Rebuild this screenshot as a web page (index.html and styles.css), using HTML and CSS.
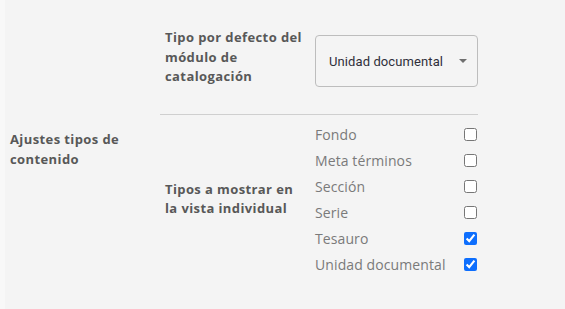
FILE: index.html
```html
<!DOCTYPE html>
<html lang="es">
<head>
  <meta charset="UTF-8" />
  <title>Ajustes tipos de contenido</title>
  <link rel="stylesheet" href="styles.css">
</head>
<body>
  <div class="settings">
    <div class="group-label">Ajustes tipos de contenido</div>

    <div class="group-body">
      <div class="row row-first">
        <div class="row-label">Tipo por defecto del módulo de catalogación</div>
        <div class="select-wrap">
          <select class="select">
            <option>Unidad documental</option>
          </select>
        </div>
      </div>

      <div class="row">
        <div class="row-label">Tipos a mostrar en la vista individual</div>
        <div class="checks">
          <label class="check"><span>Fondo</span><input type="checkbox" /></label>
          <label class="check"><span>Meta términos</span><input type="checkbox" /></label>
          <label class="check"><span>Sección</span><input type="checkbox" /></label>
          <label class="check"><span>Serie</span><input type="checkbox" /></label>
          <label class="check"><span>Tesauro</span><input type="checkbox" checked /></label>
          <label class="check"><span>Unidad documental</span><input type="checkbox" checked /></label>
        </div>
      </div>
    </div>
  </div>
</body>
</html>
```

FILE: styles.css
```css
body {
  margin: 0;
  background: #f4f4f4;
  font-family: 'Open Sans', sans-serif;
  min-height: 100vh;
  border-left: 5px solid #f8f8f8;
  box-sizing: border-box;
}

.settings {
  display: flex;
  align-items: center;
  padding: 0 0 0 5px;
}

.group-label {
  width: 150px;
  font-size: 13px;
  font-weight: 700;
  line-height: 19.5px;
  letter-spacing: 0.4px;
  color: #585858;
}

.group-body {
  width: 318px;
  padding-bottom: 16px;
}

.row {
  display: flex;
  align-items: center;
  padding-left: 5px;
}

.row-first {
  padding-top: 28px;
  padding-bottom: 27px;
  border-bottom: 1px solid #cfcfcf;
}

.row-label {
  width: 140px;
  padding-right: 10px;
  font-size: 13px;
  font-weight: 700;
  line-height: 19.5px;
  letter-spacing: 0.4px;
  color: #585858;
}

.select-wrap {
  position: relative;
  flex: 1;
  margin-top: 7px;
}

.select-wrap::after {
  content: "";
  position: absolute;
  right: 11px;
  top: 24px;
  border-left: 4px solid transparent;
  border-right: 4px solid transparent;
  border-top: 4px solid #6f6f6f;
}

.select {
  appearance: none;
  width: 100%;
  height: 52px;
  padding: 0 0 0 13px;
  border: 1px solid #bdbdbd;
  border-radius: 4px;
  background: #f4f4f4;
  font-family: Roboto, sans-serif;
  font-size: 13px;
  letter-spacing: 0.1px;
  color: #2f2f3a;
}

.checks {
  flex: 1;
  padding: 6px 0;
}

.check {
  display: flex;
  align-items: center;
  justify-content: space-between;
  height: 26px;
  font-size: 14px;
  letter-spacing: 0.1px;
  color: #7a7a7a;
}

.check input {
  margin: 0 1px 0 0;
  width: 13px;
  height: 13px;
  accent-color: #0d6efd;
}
```
